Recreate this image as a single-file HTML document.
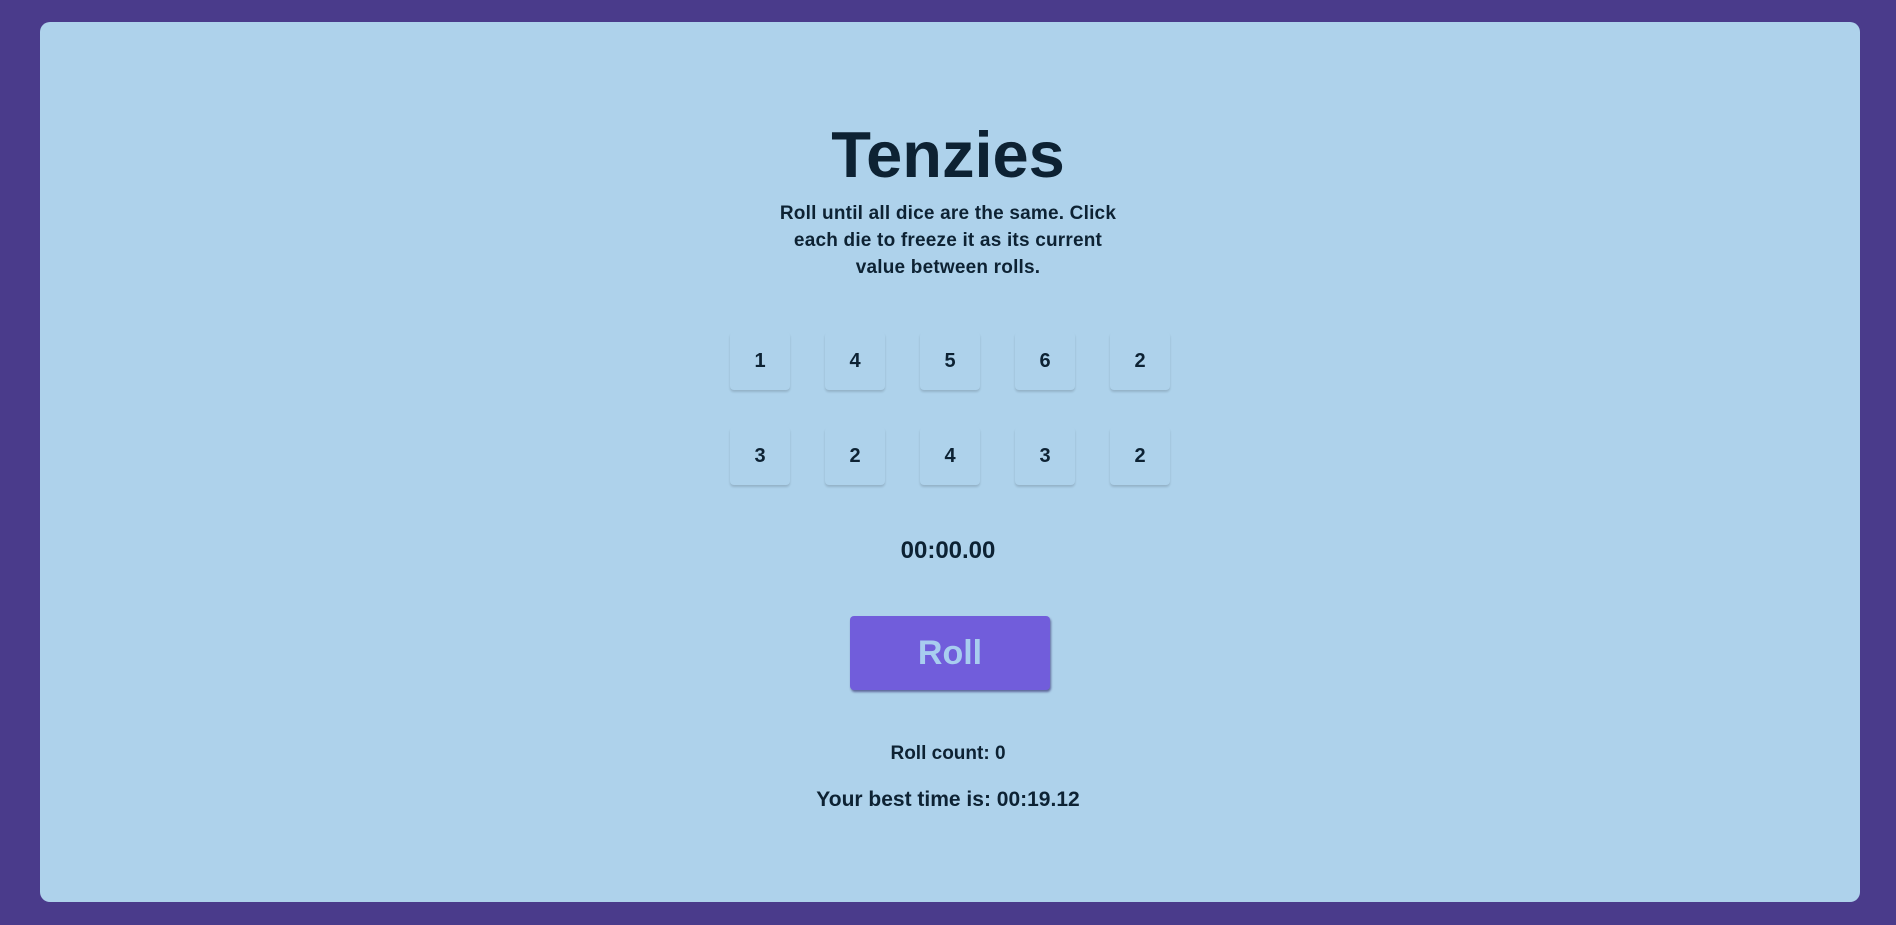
<!DOCTYPE html>
<html><head><style>
html,body{margin:0;padding:0;width:1896px;height:925px;background:#4a3b8b;overflow:hidden}
body{font-family:"Liberation Sans",sans-serif;color:#0d2233;font-weight:bold}
.card{position:absolute;left:40px;top:22px;width:1820px;height:880px;background:#aed2eb;border-radius:10px}
.c{position:absolute;left:0;width:1896px;text-align:center}
h1{position:absolute;left:0;width:1896px;text-align:center;margin:0;font-size:65px;top:115px;line-height:80px}
.sub{top:200px;font-size:19px;line-height:27px;letter-spacing:0.2px}
.die{position:absolute;width:60px;height:58px;border-radius:4px;background:#aed2eb;box-shadow:0 2px 2px rgba(0,0,0,.15);font-size:20px;line-height:58px;text-align:center}
.btn{position:absolute;left:850px;top:616px;width:200px;height:74px;background:#715ddb;border-radius:4px;box-shadow:1px 2px 2px rgba(40,30,100,.6);color:#a8cdef;font-size:34px;line-height:74px;text-align:center}
</style></head><body>
<div class="card"></div>
<h1>Tenzies</h1>
<div class="c sub">Roll until all dice are the same. Click<br>each die to freeze it as its current<br>value between rolls.</div>
<div class="die" style="left:730px;top:332px">1</div>
<div class="die" style="left:825px;top:332px">4</div>
<div class="die" style="left:920px;top:332px">5</div>
<div class="die" style="left:1015px;top:332px">6</div>
<div class="die" style="left:1110px;top:332px">2</div>
<div class="die" style="left:730px;top:427px">3</div>
<div class="die" style="left:825px;top:427px">2</div>
<div class="die" style="left:920px;top:427px">4</div>
<div class="die" style="left:1015px;top:427px">3</div>
<div class="die" style="left:1110px;top:427px">2</div>
<div class="c" style="top:536px;font-size:24px;line-height:30px">00:00.00</div>
<div class="btn">Roll</div>
<div class="c" style="top:742px;font-size:19px;line-height:24px">Roll count: 0</div>
<div class="c" style="top:787px;font-size:21px;line-height:26px">Your best time is: 00:19.12</div>
</body></html>
